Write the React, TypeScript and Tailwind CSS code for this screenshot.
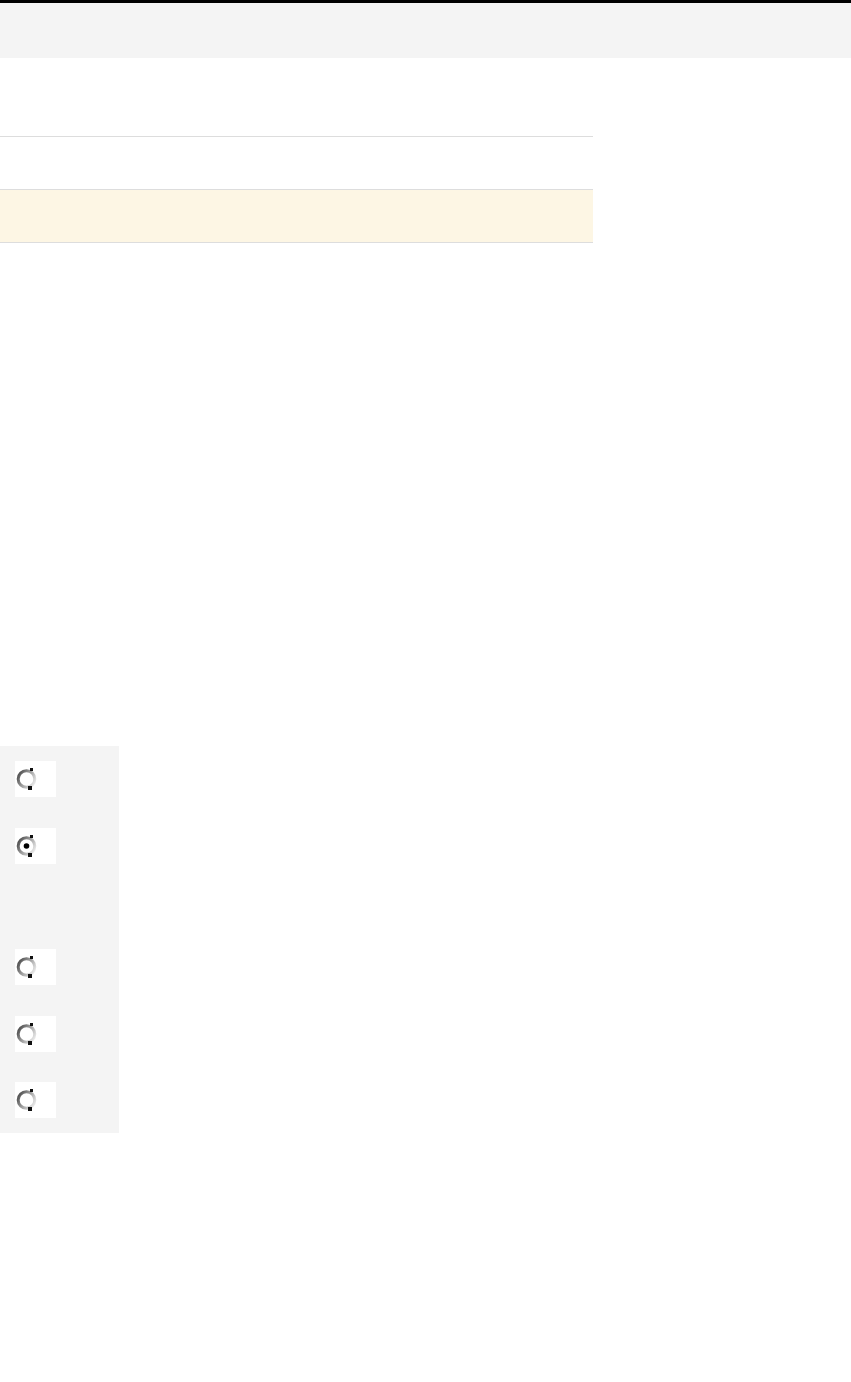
import React from "react";

type RadioProps = {
  checked?: boolean;
};

// old-style native radio look, drawn by hand
function Radio({ checked }: RadioProps) {
  return (
    <svg width="21" height="24" viewBox="0 0 21 24" aria-hidden="true">
      <defs>
        <linearGradient id="ring" x1="0" y1="0.2" x2="1" y2="0.8">
          <stop offset="0" stopColor="#4f4f4f" />
          <stop offset="0.45" stopColor="#9a9a9a" />
          <stop offset="1" stopColor="#ebebeb" />
        </linearGradient>
      </defs>
      <circle cx="10.5" cy="12" r="8.3" fill="#ffffff" stroke="url(#ring)" strokeWidth="3" />
      <rect x="14" y="1" width="3" height="3" fill="#111111" />
      <rect x="12" y="19" width="4" height="4" fill="#111111" />
      {checked && <circle cx="10.5" cy="12" r="2.8" fill="#000000" />}
    </svg>
  );
}

function RadioBox({ checked }: RadioProps) {
  return (
    <div className="flex h-[36px] w-[41px] items-center bg-white pl-[1px]">
      <Radio checked={checked} />
    </div>
  );
}

export default function App() {
  return (
    <div className="min-h-[1382px] bg-white font-['Liberation_Sans',sans-serif]">
      <div className="h-[58px] border-t-[3px] border-black bg-[#f4f4f4]" />

      <div className="mt-[78px] h-[53px] w-[593px] border-t border-[#dddddd]" />
      <div className="h-[54px] w-[593px] border-y border-[#dddddd] bg-[#fdf6e4]" />

      <div className="mt-[503px] flex w-[119px] flex-col bg-[#f4f4f4] px-[15px] pb-[15px] pt-[15px]">
        <RadioBox />
        <div className="mt-[31px]">
          <RadioBox checked />
        </div>
        <div className="mt-[85px]">
          <RadioBox />
        </div>
        <div className="mt-[31px]">
          <RadioBox />
        </div>
        <div className="mt-[30px]">
          <RadioBox />
        </div>
      </div>
    </div>
  );
}
